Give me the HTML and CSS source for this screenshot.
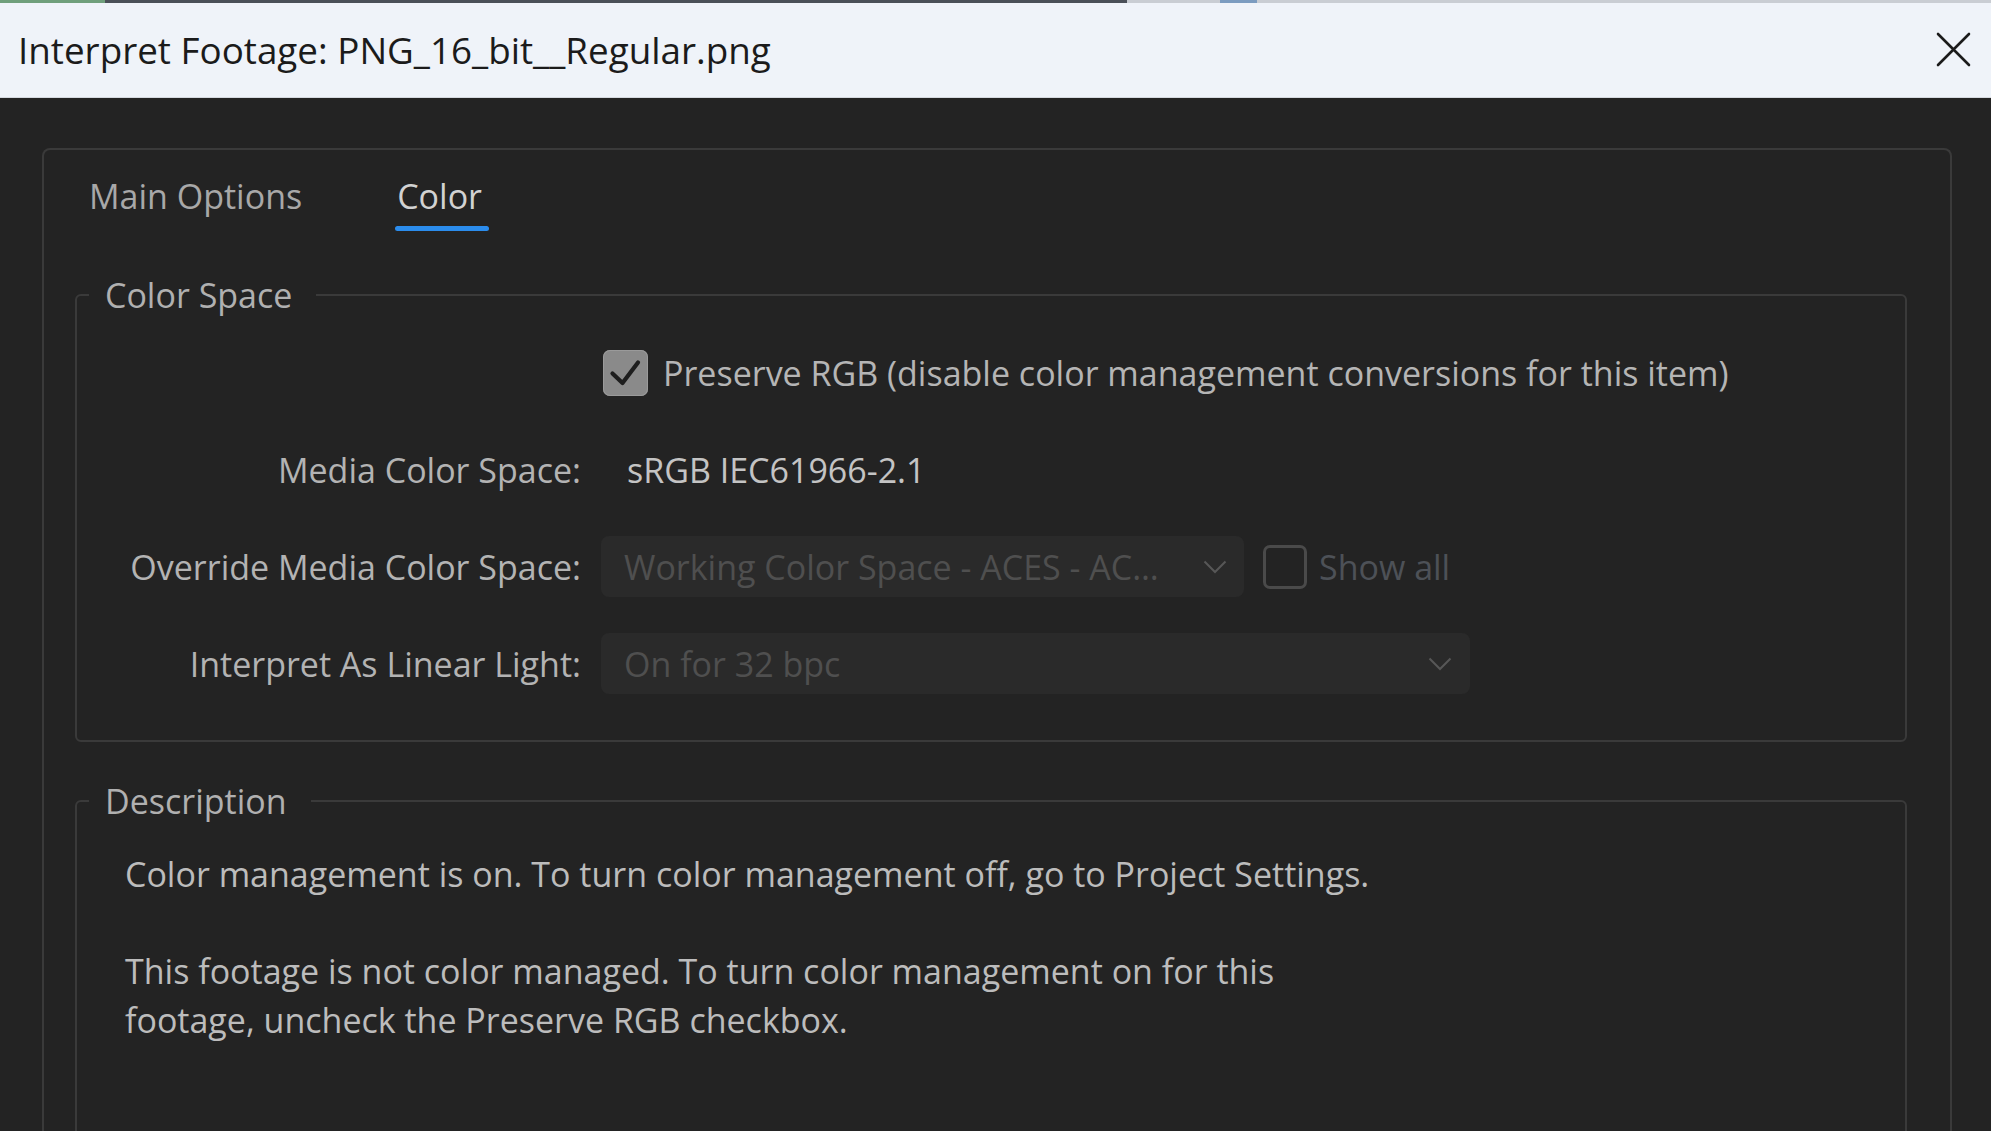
FILE: index.html
```html
<!DOCTYPE html>
<html lang="en">
<head>
<meta charset="utf-8">
<title>Interpret Footage: PNG_16_bit__Regular.png</title>
<link rel="stylesheet" href="styles.css">
</head>
<body>
<div class="window">
  <div class="topstrip">
    <span class="seg seg-green"></span>
    <span class="seg seg-dark"></span>
    <span class="seg seg-light"></span>
    <span class="seg seg-blue"></span>
    <span class="seg seg-light2"></span>
  </div>
  <header class="titlebar">
    <div class="title">Interpret Footage: PNG_16_bit__Regular.png</div>
    <button class="close" aria-label="Close">
      <svg width="35" height="35" viewBox="0 0 35 35"><path d="M2 2 L33 33 M33 2 L2 33" stroke="#1b1b1b" stroke-width="2.6" stroke-linecap="round" fill="none"/></svg>
    </button>
  </header>
  <main class="content">
    <section class="panel">
      <nav class="tabs">
        <div class="tab">Main Options</div>
        <div class="tab active">Color</div>
      </nav>

      <fieldset class="group">
        <legend>Color Space</legend>
        <div class="form">
          <div class="label"></div>
          <div class="value">
            <span class="cb checked">
              <svg width="45" height="46" viewBox="0 0 45 46"><path d="M9.5 23.5 L19.5 33 L35 12.5" stroke="#1e1e1e" stroke-width="4.2" stroke-linecap="round" stroke-linejoin="round" fill="none"/></svg>
            </span>
            <span class="cb-text">Preserve RGB (disable color management conversions for this item)</span>
          </div>

          <div class="label">Media Color Space:</div>
          <div class="value"><span class="static">sRGB IEC61966-2.1</span></div>

          <div class="label">Override Media Color Space:</div>
          <div class="value gap-wide">
            <div class="select select-override">
              <span>Working Color Space - ACES - AC…</span>
              <svg class="chev" width="24" height="14" viewBox="0 0 24 14"><path d="M1.5 1.5 L12 12 L22.5 1.5" stroke="#575757" stroke-width="2" fill="none"/></svg>
            </div>
            <span class="cb-group">
              <span class="cb empty"></span>
              <span class="cb-text disabled">Show all</span>
            </span>
          </div>

          <div class="label">Interpret As Linear Light:</div>
          <div class="value">
            <div class="select select-linear">
              <span>On for 32 bpc</span>
              <svg class="chev" width="24" height="14" viewBox="0 0 24 14"><path d="M1.5 1.5 L12 12 L22.5 1.5" stroke="#575757" stroke-width="2" fill="none"/></svg>
            </div>
          </div>
        </div>
      </fieldset>

      <fieldset class="group description">
        <legend>Description</legend>
        <p class="desc">Color management is on. To turn color management off, go to Project Settings.<br><br>This footage is not color managed. To turn color management on for this<br>footage, uncheck the Preserve RGB checkbox.</p>
      </fieldset>
    </section>
  </main>
</div>
</body>
</html>
```

FILE: styles.css
```css
html, body {
  margin: 0;
  padding: 0;
}

body {
  width: 1991px;
  height: 1131px;
  overflow: hidden;
  background: #232323;
  font-family: "Open Sans", "Noto Sans", sans-serif;
}

.window {
  display: flex;
  flex-direction: column;
  height: 1131px;
}

/* thin strip of the window behind, visible above the title bar */
.topstrip {
  display: flex;
  height: 3px;
  flex: none;
}
.seg { display: block; height: 100%; }
.seg-green { width: 105px; background: #6f9f7c; }
.seg-dark { width: 1022px; background: #4a5058; }
.seg-light { width: 93px; background: #c9cdd3; }
.seg-blue { width: 37px; background: #7c9cc0; }
.seg-light2 { flex: 1; background: #c9cdd3; }

.titlebar {
  flex: none;
  height: 95px;
  box-sizing: border-box;
  background: #eff3f9;
  border-bottom: 1px solid #d5d9df;
  display: flex;
  align-items: center;
  justify-content: space-between;
  padding: 0 20px 0 18px;
}

.title {
  font-size: 36.8px;
  color: #1b1b1b;
  white-space: nowrap;
}

.close {
  width: 35px;
  height: 35px;
  padding: 0;
  border: 0;
  background: none;
  display: flex;
  margin-top: -2px;
}

.content {
  flex: 1;
  padding: 50px 39px 0 42px;
  min-height: 0;
}

.panel {
  height: 100%;
  box-sizing: border-box;
  border: 2px solid #3a3a3a;
  border-bottom: 0;
  border-radius: 8px 8px 0 0;
  padding: 23.5px 43px 0 31px;
}

/* tabs */
.tabs {
  display: flex;
  gap: 95px;
  margin-left: 14px;
}

.tab {
  display: flex;
  flex-direction: column;
  font-size: 34px;
  line-height: 44px;
  color: #a8a8a8;
}
.tab::after {
  content: "";
  height: 5px;
  margin: 8px -7px 0 -2px;
  border-radius: 3px;
  background: transparent;
}
.tab.active { color: #d2d2d2; }
.tab.active::after { background: #2b8cec; }

/* groups */
.group {
  margin: 42.5px 0 0;
  border: 2px solid #3a3a3a;
  border-radius: 6px;
  padding: 25px 0 46px;
  min-width: 0;
}

.group legend {
  font-size: 34px;
  line-height: 44px;
  color: #b0b0b0;
  padding: 0 24px 0 16px;
  margin-left: 12px;
}

.form {
  display: grid;
  grid-template-columns: 504px 1fr;
  grid-auto-rows: 61px;
  column-gap: 20px;
  row-gap: 36px;
  align-items: center;
}

.label {
  text-align: right;
  font-size: 34px;
  color: #b3b3b3;
  white-space: nowrap;
}

.value {
  display: flex;
  align-items: center;
  gap: 15px;
  font-size: 34px;
  white-space: nowrap;
}
.value.gap-wide { gap: 19px; }

.static {
  color: #c4c4c4;
  padding-left: 26px;
}

.cb {
  flex: none;
  box-sizing: border-box;
  display: flex;
  border-radius: 7px;
}
.cb.checked {
  width: 45px;
  height: 46px;
  margin-left: 2px;
  background: #8a8a8a;
  box-shadow: inset 0 0 0 1px #9a9a9a;
}
.cb.empty {
  width: 44px;
  height: 44px;
  border: 3.5px solid #4a4a4a;
}

.cb-text { color: #b5b5b5; }
.cb-text.disabled { color: #4d5157; }

.cb-group {
  display: flex;
  align-items: center;
  gap: 12px;
}

.select {
  box-sizing: border-box;
  height: 61px;
  border-radius: 8px;
  background: #2a2a2a;
  display: flex;
  align-items: center;
  justify-content: space-between;
  padding: 0 17px 0 23px;
  color: #4f4f4f;
}
.select-override { width: 643px; }
.select-linear { width: 869px; padding-right: 18px; }
.chev { flex: none; }

/* description */
.description {
  margin-top: 37px;
  padding: 27px 40px 0 0;
  min-height: 400px;
}

.desc {
  margin: 0;
  padding-left: 48px;
  font-size: 34px;
  line-height: 48.5px;
  color: #bcbcbc;
}
```
